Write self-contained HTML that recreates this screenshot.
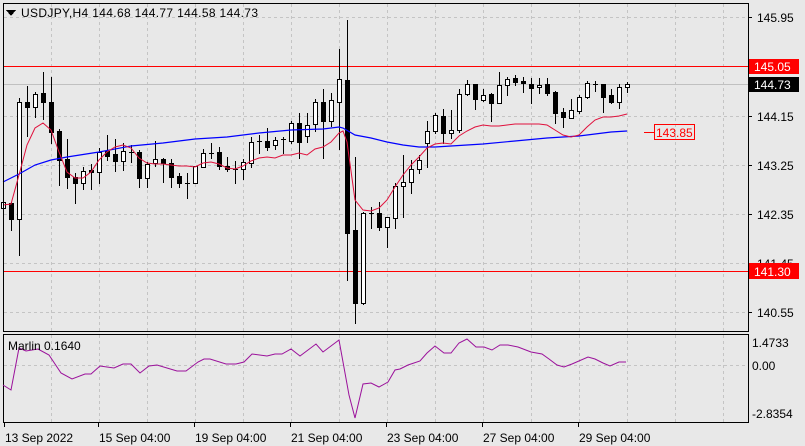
<!DOCTYPE html>
<html><head><meta charset="utf-8"><style>
html,body{margin:0;padding:0;background:#e8e8e8;}
svg{display:block;font-family:"Liberation Sans",Tahoma,sans-serif;font-size:12px;}
</style></head><body>
<svg id="s" width="805" height="446" xmlns="http://www.w3.org/2000/svg" shape-rendering="crispEdges">
<rect x="0" y="0" width="805" height="446" fill="#e8e8e8"/>
<g id="grid" stroke="#c4c4c4" stroke-dasharray="3,3"></g>
<line x1="4" y1="84.5" x2="748" y2="84.5" stroke="#c0c0c0"/>
<line x1="4" y1="66.5" x2="748" y2="66.5" stroke="#ff0000"/>
<line x1="4" y1="271.5" x2="748" y2="271.5" stroke="#ff0000"/>
<g id="cand"></g>
<polyline shape-rendering="auto" fill="none" stroke="#0000ff" stroke-width="1.2" points="3,182 19,174 35,165 51,160 67,157 99,152 131,146 163,143 195,139 227,137 259,133 291,130 323,129 339,127 343,128 355,135 371,138 387,142 403,145 419,147 435,147 451,146 483,144 515,141 547,138 579,136 611,132 627,131"/>
<polyline shape-rendering="auto" fill="none" stroke="#e0103c" stroke-width="1" points="3,205 11,204 19,175 27,145 35,128 43,123 51,130 59,152 67,172 75,178 83,178 91,172 99,160 107,152 115,147 123,145 131,148 139,158 147,163 155,164 163,164 171,165 179,166 187,166 195,167 203,163 211,162 219,164 227,168 235,169 243,166 251,161 259,158 267,157 275,158 283,155 291,155 299,153 307,155 315,149 323,147 331,142 339,133 343,131 347,142 355,200 363,210 371,211 379,208 387,200 395,187 403,175 411,165 419,157 427,148 435,144 443,143 451,144 459,136 467,131 475,127 483,125 491,126 499,126 507,125 515,124 523,124 531,124 539,124 547,125 555,130 563,135 571,137 579,135 587,127 595,120 603,117 611,117 619,116 627,114"/>
<rect x="3.5" y="3.5" width="745" height="328" fill="none" stroke="#000"/>
<rect x="3.5" y="334.5" width="745" height="88" fill="none" stroke="#000"/>
<line x1="4" y1="365.5" x2="748" y2="365.5" stroke="#c4c4c4" stroke-dasharray="3,3"/>
<polyline shape-rendering="auto" fill="none" stroke="#9b119b" stroke-width="1" points="3,385 11,390 19,348 26,351 38,349 49,355 61,373 72,379 85,374 91,374 100,366 114,368 123,364 131,364 140,373 149,366 157,365 177,371 186,371 198,362 204,359 210,359 226,364 236,364 244,362 252,354 267,356 275,354 282,354 291,349 300,356 316,344 323,352 339,340 349,395 355,418 363,384 371,383 379,387 388,382 395,370 400,369 408,365 420,361 427,353 435,346 444,353 451,353 459,343 467,339 476,347 484,347 492,350 500,345 508,345 518,347 531,352 542,354 549,359 557,365 564,367 572,364 588,357 595,359 603,363 610,366 619,362 626,362"/>
<text x="8" y="350" fill="#000">Marlin 0.1640</text>
<polygon points="6,10 16,10 11,16" fill="#000"/>
<text x="21" y="17" fill="#000" textLength="237" lengthAdjust="spacing">USDJPY,H4  144.68 144.77 144.58 144.73</text>
<g id="ax" fill="#000"></g>
<rect x="749" y="59" width="50" height="15" fill="#ff0000"/>
<text x="754" y="71" fill="#fff">145.05</text>
<rect x="749" y="77" width="50" height="15" fill="#000"/>
<text x="754" y="89" fill="#fff">144.73</text>
<rect x="749" y="263" width="50" height="16" fill="#ff0000"/>
<text x="754" y="276" fill="#fff">141.30</text>
<line x1="644" y1="132.5" x2="654" y2="132.5" stroke="#ff0000"/>
<rect x="654.5" y="124.5" width="40" height="15" fill="none" stroke="#ff0000"/>
<text x="656" y="137" fill="#ff0000">143.85</text>
<text x="752" y="347" fill="#000">1.4733</text>
<text x="752" y="370" fill="#000">0.00</text>
<text x="752" y="418" fill="#000">-2.8354</text>
<g id="tx" fill="#000"></g>
</svg>
<script>
var NS="http://www.w3.org/2000/svg";
function el(p,t,a,txt){var e=document.createElementNS(NS,t);for(var k in a)e.setAttribute(k,a[k]);if(txt)e.textContent=txt;p.appendChild(e);return e;}
var g=document.getElementById('grid');
for(var x=51;x<748;x+=48){el(g,'line',{x1:x+.5,y1:4,x2:x+.5,y2:331});el(g,'line',{x1:x+.5,y1:335,x2:x+.5,y2:422});}
var lv=[[17,'145.95'],[66,'145.05'],[116,'144.15'],[165,'143.25'],[214,'142.35'],[263,'141.45'],[312,'140.55']];
var ax=document.getElementById('ax');
lv.forEach(function(l){if(l[0]!=66)el(g,'line',{x1:4,y1:l[0]+.5,x2:748,y2:l[0]+.5});el(ax,'line',{x1:748,y1:l[0]+.5,x2:752,y2:l[0]+.5,stroke:'#000'});if(l[0]!=66)el(ax,'text',{x:757,y:l[0]+5},l[1]);});
var tx=document.getElementById('tx');
[[4,'13 Sep 2022'],[98,'15 Sep 04:00'],[194,'19 Sep 04:00'],[290,'21 Sep 04:00'],[386,'23 Sep 04:00'],[482,'27 Sep 04:00'],[578,'29 Sep 04:00']].forEach(function(t){el(tx,'line',{x1:t[0]+.5,y1:423,x2:t[0]+.5,y2:427,stroke:'#000'});el(tx,'text',{x:t[0]+1,y:442},t[1]);});
var C=[[3,193,208,202,217],[11,202,203,219,230],[19,98,219,102,255],[27,86,102,107,136],[35,92,107,94,117],[43,72,93,102,119],[51,77,102,132,143],[59,129,131,160,185],[67,139,159,177,188],[75,173,177,183,203],[83,167,183,171,189],[91,164,170,172,189],[99,148,172,152,183],[107,135,151,156,160],[115,139,154,161,171],[123,143,161,151,170],[131,145,152,152,162],[139,150,152,178,187],[147,162,178,164,187],[155,141,163,159,166],[163,158,159,163,182],[171,159,163,177,187],[179,173,176,183,187],[187,173,183,183,198],[195,166,183,166,183],[203,149,167,153,167],[211,143,153,153,158],[219,147,152,166,169],[227,157,166,169,171],[235,161,169,169,183],[243,159,169,162,179],[251,137,163,142,167],[259,135,141,141,153],[267,128,141,147,150],[275,137,145,140,149],[283,137,139,139,153],[291,121,141,123,143],[299,113,123,142,158],[307,113,136,125,142],[315,99,124,102,131],[323,89,102,121,158],[331,93,121,100,126],[339,49,102,79,149],[347,20,80,233,280],[355,157,230,303,323],[363,212,303,213,304],[371,207,213,213,228],[379,202,213,227,230],[387,217,227,217,247],[395,183,218,186,228],[403,155,186,182,217],[411,160,182,169,193],[419,155,169,160,173],[427,121,143,131,167],[435,113,131,115,133],[443,109,116,133,143],[451,110,133,130,138],[459,89,130,94,132],[467,80,94,84,95],[475,84,84,99,109],[483,89,100,95,101],[491,93,94,103,121],[499,72,103,85,103],[507,77,85,79,95],[515,75,78,82,85],[523,77,81,83,92],[531,78,84,88,103],[539,78,87,85,93],[547,78,84,93,95],[555,91,92,113,123],[563,108,112,117,127],[571,99,118,110,118],[579,95,111,97,113],[587,81,97,83,98],[595,81,84,84,91],[603,84,84,97,112],[611,89,95,102,103],[619,84,102,87,108],[627,82,87,84,92]];
var cg=document.getElementById('cand');
C.forEach(function(c){var x=c[0],H=c[1],O=c[2],Cl=c[3],L=c[4];
el(cg,'line',{x1:x+.5,y1:H,x2:x+.5,y2:L+1,stroke:'#000'});
var top=Math.min(O,Cl),bot=Math.max(O,Cl);
if(bot-top<1){el(cg,'line',{x1:x-2,y1:top+.5,x2:x+3,y2:top+.5,stroke:'#000'});}
else{var white=O>Cl;el(cg,'rect',{x:x-1.5,y:top+.5,width:4,height:bot-top,fill:white?'#fff':'#000',stroke:'#000'});}
});
</script>
</body></html>
